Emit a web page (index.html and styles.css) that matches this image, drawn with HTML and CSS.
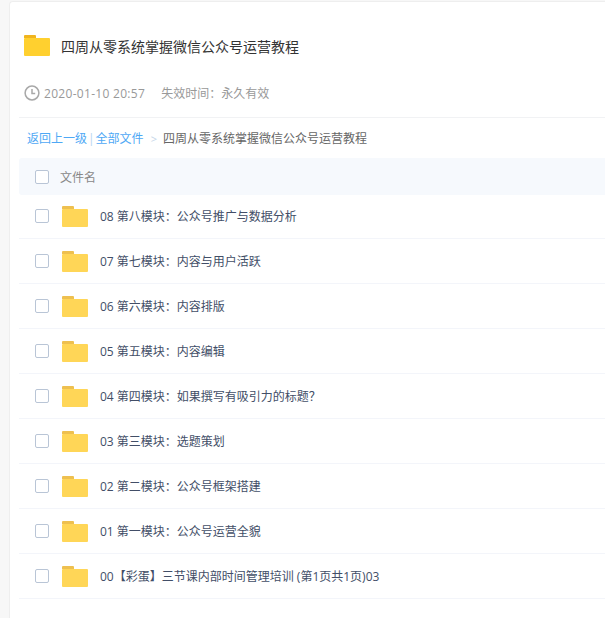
FILE: index.html
```html
<!DOCTYPE html>
<html lang="zh-CN">
<head>
<meta charset="utf-8">
<title>四周从零系统掌握微信公众号运营教程</title>
<link rel="stylesheet" href="styles.css">
</head>
<body>
<main class="card">
  <header class="head">
    <svg class="folder-big" viewBox="0 0 26 21" width="26" height="21"><path d="M1 0h10a1 1 0 0 1 1 1v2H0V1a1 1 0 0 1 1-1z" fill="#f0b41e"/><path d="M1 3h24a1 1 0 0 1 1 1v16a1 1 0 0 1-1 1H1a1 1 0 0 1-1-1V4a1 1 0 0 1 1-1z" fill="#ffd02f"/></svg>
    <h1 class="title">四周从零系统掌握微信公众号运营教程</h1>
  </header>
  <div class="meta">
    <svg class="clock" viewBox="0 0 16 16" width="16" height="16"><circle cx="8" cy="8" r="6.9" fill="none" stroke="#a8a8a8" stroke-width="1.5"/><path d="M8 4v4.6h3.2" fill="none" stroke="#a8a8a8" stroke-width="1.5"/></svg>
    <span class="date">2020-01-10 20:57</span>
    <span class="expire">失效时间：永久有效</span>
  </div>
  <nav class="crumbs">
    <a class="link">返回上一级</a><span class="pipe">|</span><a class="link">全部文件</a><span class="sep">&gt;</span><span class="here">四周从零系统掌握微信公众号运营教程</span>
  </nav>
  <div class="thead"><span class="check"></span><span class="thname">文件名</span></div>
  <ul class="list">
    <li class="row"><span class="check"></span><svg class="folder" viewBox="0 0 26 21" width="26" height="21"><use href="#f"/></svg><span class="name">08 第八模块：公众号推广与数据分析</span></li>
    <li class="row"><span class="check"></span><svg class="folder" viewBox="0 0 26 21" width="26" height="21"><use href="#f"/></svg><span class="name">07 第七模块：内容与用户活跃</span></li>
    <li class="row"><span class="check"></span><svg class="folder" viewBox="0 0 26 21" width="26" height="21"><use href="#f"/></svg><span class="name">06 第六模块：内容排版</span></li>
    <li class="row"><span class="check"></span><svg class="folder" viewBox="0 0 26 21" width="26" height="21"><use href="#f"/></svg><span class="name">05 第五模块：内容编辑</span></li>
    <li class="row"><span class="check"></span><svg class="folder" viewBox="0 0 26 21" width="26" height="21"><use href="#f"/></svg><span class="name">04 第四模块：如果撰写有吸引力的标题？</span></li>
    <li class="row"><span class="check"></span><svg class="folder" viewBox="0 0 26 21" width="26" height="21"><use href="#f"/></svg><span class="name">03 第三模块：选题策划</span></li>
    <li class="row"><span class="check"></span><svg class="folder" viewBox="0 0 26 21" width="26" height="21"><use href="#f"/></svg><span class="name">02 第二模块：公众号框架搭建</span></li>
    <li class="row"><span class="check"></span><svg class="folder" viewBox="0 0 26 21" width="26" height="21"><use href="#f"/></svg><span class="name">01 第一模块：公众号运营全貌</span></li>
    <li class="row"><span class="check"></span><svg class="folder" viewBox="0 0 26 21" width="26" height="21"><use href="#f"/></svg><span class="name">00【彩蛋】三节课内部时间管理培训 (第1页共1页)03</span></li>
  </ul>
</main>
<svg class="defs" width="0" height="0"><defs><g id="f"><path d="M1 0h10a1 1 0 0 1 1 1v2H0V1a1 1 0 0 1 1-1z" fill="#eec050"/><path d="M1 3h24a1 1 0 0 1 1 1v16a1 1 0 0 1-1 1H1a1 1 0 0 1-1-1V4a1 1 0 0 1 1-1z" fill="#ffd657"/></g></defs></svg>
</body>
</html>
```
FILE: styles.css
```css
* { box-sizing: border-box; }
html, body { margin: 0; height: 100%; overflow: hidden; }
body {
  background: #f7f7f7;
  padding: 1px 0 0 9px;
  font-family: "Open Sans", "Noto Sans CJK SC", sans-serif;
  color: #424e67;
}
.card {
  background: #fff;
  border: 1px solid #eee;
  border-right: 0;
  border-bottom: 0;
  border-radius: 4px 0 0 0;
  height: 640px;
  padding-left: 9px;
}
.head { display: flex; align-items: center; height: 55px; margin-top: 16px; padding-left: 5px; }
.folder-big { flex: none; }
.title { margin: 0 0 0 11px; padding-top: 2px; font-size: 14px; font-weight: 400; color: #333; line-height: 20px; }
.meta {
  display: flex; align-items: center; height: 45px; padding: 0 0 4px 5px;
  border-bottom: 1px solid #f1f2f4; font-size: 12px; color: #999;
}
.clock { flex: none; }
.date { margin-left: 4px; letter-spacing: 0.3px; }
.expire { margin-left: 16px; }
.crumbs { display: flex; align-items: center; height: 40px; padding-left: 8px; font-size: 12px; }
.link { color: #4ea8f5; }
.pipe { color: #b8d4ef; margin: 0 1px; }
.sep { color: #c5d6e8; margin: 0 6px 0 7px; font-size: 11px; }
.here { color: #666; }
.thead {
  display: flex; align-items: center; height: 37px; padding-left: 16px;
  background: #f6f9fd; font-size: 12px; color: #888; border-radius: 3px 0 0 3px;
}
.thname { margin-left: 11px; }
.check {
  flex: none; width: 14px; height: 14px; background: #fff;
  border: 1px solid #b9c5d6; border-radius: 2px;
}
.list { list-style: none; margin: 0; padding: 0; }
.row {
  display: flex; align-items: center; height: 45px; padding-left: 16px;
  border-bottom: 1px solid #f3f5fa; font-size: 12px;
}
.row:first-child { height: 44px; padding-bottom: 1px; }
.folder { flex: none; margin: 1px 0 0 13px; }
.name { margin-left: 12px; white-space: nowrap; }
.defs { position: absolute; }
```
